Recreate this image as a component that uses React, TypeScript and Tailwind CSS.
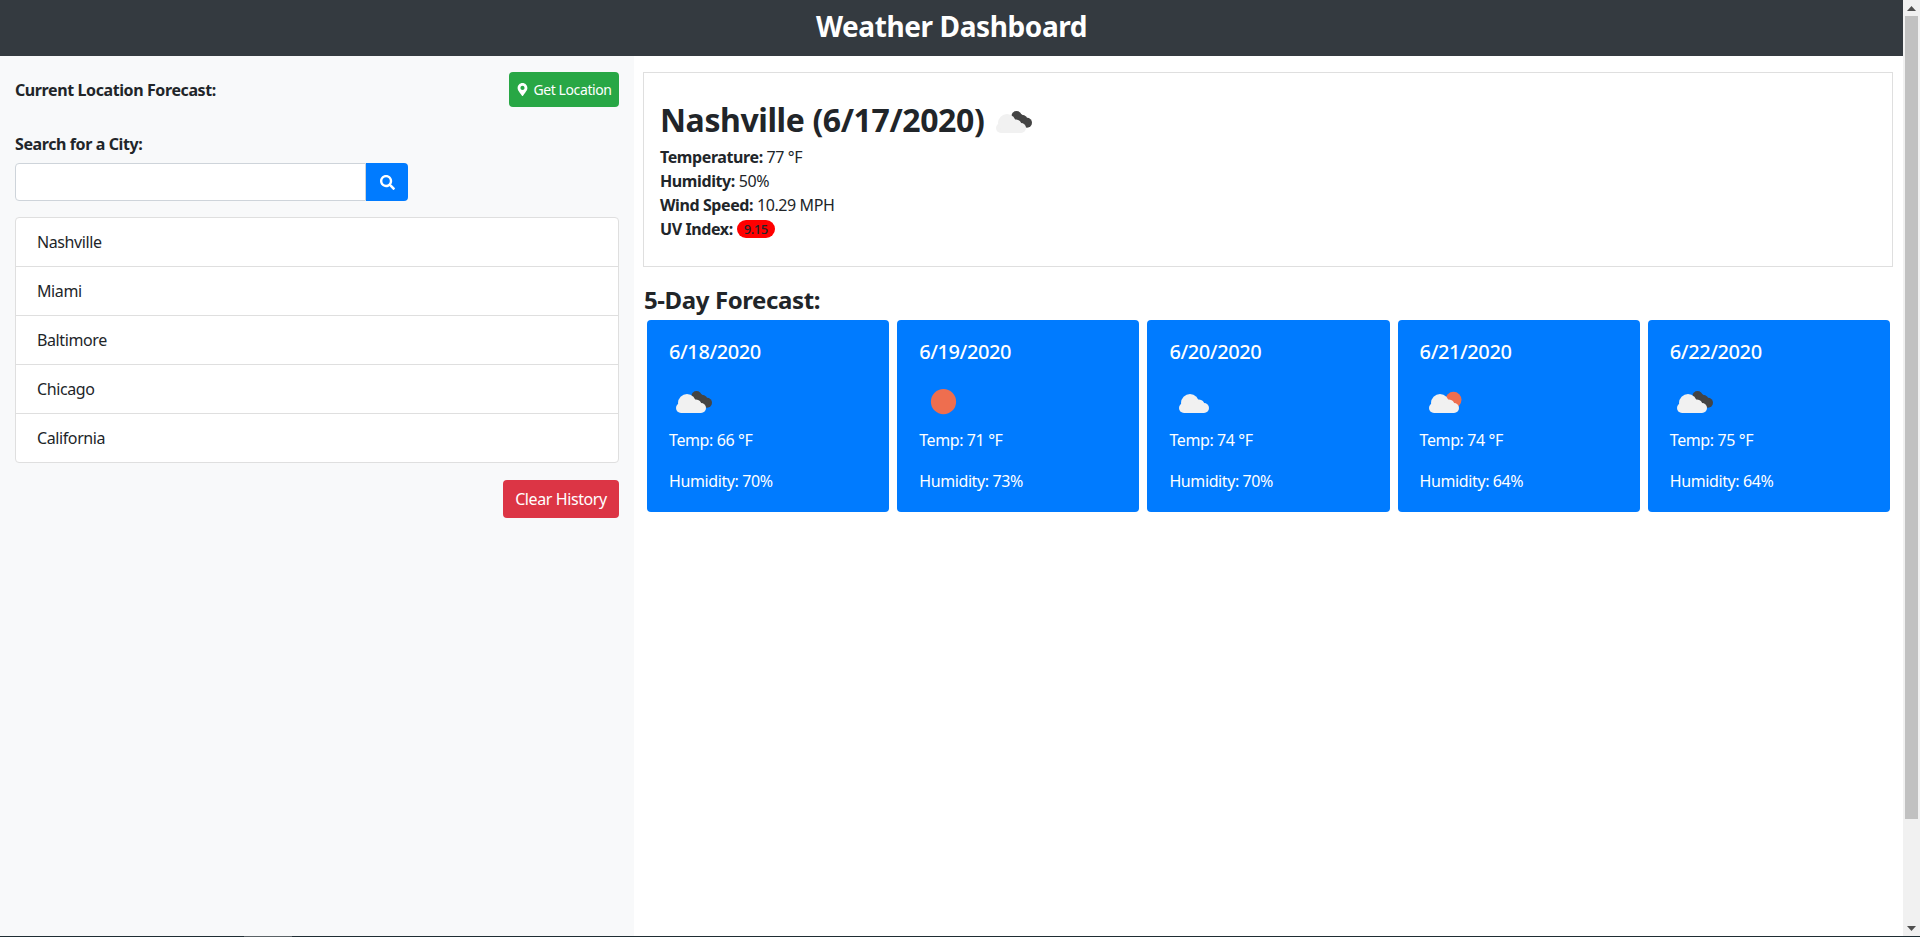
import React from "react";
import { FaMapMarkerAlt, FaSearch } from "react-icons/fa";

type Kind = "dark" | "sun" | "white" | "sunCloud";

function WeatherIcon({ kind }: { kind: Kind }) {
  const white = (dx: number) => (
    <g fill="#f1f1f1" transform={`translate(${dx} 0)`}>
      <circle cx="12" cy="31" r="5" />
      <circle cx="18" cy="26" r="9" />
      <circle cx="27" cy="28" r="5.5" />
      <circle cx="32" cy="31" r="5" />
      <rect x="12" y="28" width="20" height="8" />
    </g>
  );
  return (
    <svg width="50" height="50" viewBox="0 0 50 50" className="block shrink-0">
      {kind === "sun" && <circle cx="24.5" cy="24.7" r="12.6" fill="#ee6e4f" />}
      {kind === "dark" && (
        <g fill="#444444">
          <circle cx="27.5" cy="19" r="5" />
          <circle cx="33.5" cy="22.5" r="4.5" />
          <circle cx="38" cy="25.8" r="5" />
          <polygon points="24,23 29,15 40,22 39,30 30,30" />
        </g>
      )}
      {kind === "sunCloud" && <circle cx="33.5" cy="22.8" r="8" fill="#ee6e4f" />}
      {kind === "sun" ? null : white(kind === "dark" ? 0 : kind === "sunCloud" ? 2 : 3)}
    </svg>
  );
}

const days: { date: string; kind: Kind; temp: number; hum: number }[] = [
  { date: "6/18/2020", kind: "dark", temp: 66, hum: 70 },
  { date: "6/19/2020", kind: "sun", temp: 71, hum: 73 },
  { date: "6/20/2020", kind: "white", temp: 74, hum: 70 },
  { date: "6/21/2020", kind: "sunCloud", temp: 74, hum: 64 },
  { date: "6/22/2020", kind: "dark", temp: 75, hum: 64 },
];

const cities = ["Nashville", "Miami", "Baltimore", "Chicago", "California"];

export default function App() {
  return (
    <div className="h-[937px] w-[1920px] overflow-hidden flex flex-col bg-white text-[#212529] font-['Noto_Sans',sans-serif] text-base tracking-[-0.4px]">
      <div className="flex flex-1 min-h-0">
        <div className="w-[1903px] flex flex-col">
          <header className="h-14 shrink-0 bg-[#343a40] text-white flex items-center justify-center">
            <h1 className="text-[28px] leading-[50px] font-bold pb-1">Weather Dashboard</h1>
          </header>
          <div className="flex flex-1 min-h-0">
            <aside className="w-[634px] shrink-0 bg-[#f8f9fa] pl-[15px] pr-[15px] pt-4">
              <div className="flex items-center justify-between h-[35px]">
                <span className="font-bold leading-6">Current Location Forecast:</span>
                <button className="h-[35px] w-[110px] bg-[#28a745] text-white rounded text-sm flex items-center justify-center gap-1">
                  <FaMapMarkerAlt className="text-[13px]" />
                  Get Location
                </button>
              </div>
              <div className="font-bold leading-6 mt-[25px]">Search for a City:</div>
              <div className="flex w-[393px] h-[38px] mt-[7px]">
                <input className="flex-1 min-w-0 bg-white border border-[#ced4da] rounded-l" aria-label="Search" />
                <button className="w-[42px] bg-[#007bff] text-white rounded-r flex items-center justify-center" aria-label="Search">
                  <FaSearch className="text-[15px]" />
                </button>
              </div>
              <ul className="mt-4 bg-white border border-[#dfdfdf] rounded divide-y divide-[#dfdfdf]">
                {cities.map((c) => (
                  <li key={c} className="h-[49px] px-[21px] flex items-center last:h-[48px]">{c}</li>
                ))}
              </ul>
              <div className="flex justify-end mt-[17px]">
                <button className="h-[38px] w-[116px] bg-[#dc3545] text-white rounded">Clear History</button>
              </div>
            </aside>
            <main className="flex-1 min-w-0 pt-4 pl-[9px] pr-[10px]">
              <section className="h-[195px] border border-[#dfdfdf] px-4 pt-4">
                <div className="flex items-center h-[48px] mt-[7px]">
                  <h2 className="text-[32px] leading-[48px] font-bold">Nashville (6/17/2020)</h2>
                  <div className="ml-[5px] mt-1"><WeatherIcon kind="dark" /></div>
                </div>
                <div className="mt-[1px] leading-6">
                  <p><b>Temperature:</b> 77 °F</p>
                  <p><b>Humidity:</b> 50%</p>
                  <p><b>Wind Speed:</b> 10.29 MPH</p>
                  <p className="flex items-center gap-1">
                    <b>UV Index:</b>
                    <span className="bg-[#ff0000] rounded-full w-[38px] h-[18px] flex items-center justify-center text-[13px] font-medium">9.15</span>
                  </p>
                </div>
              </section>
              <h3 className="text-2xl leading-[36px] font-bold mt-[15px] ml-[1px]">5-Day Forecast:</h3>
              <div className="flex gap-2 ml-1 mr-[3px] mt-[2px]">
                {days.map((d) => (
                  <div key={d.date} className="flex-1 h-[192px] bg-[#007bff] text-white rounded pl-[22px] pt-5">
                    <div className="text-xl leading-6 font-medium">{d.date}</div>
                    <div className="mt-[13px]"><WeatherIcon kind={d.kind} /></div>
                    <div className="mt-[1px] leading-6">Temp: {d.temp} °F</div>
                    <div className="mt-[17px] leading-6">Humidity: {d.hum}%</div>
                  </div>
                ))}
              </div>
            </main>
          </div>
        </div>
        <div className="w-[17px] shrink-0 bg-[#f1f1f1] flex flex-col items-center">
          <div className="h-4 flex items-center justify-center">
            <svg width="9" height="5" viewBox="0 0 9 5"><polygon points="4.5,0 9,5 0,5" fill="#505050" /></svg>
          </div>
          <div className="w-[13px] h-[803px] bg-[#c1c1c1]" />
          <div className="flex-1 flex items-end pb-[5px]">
            <svg width="9" height="5" viewBox="0 0 9 5"><polygon points="0,0 9,0 4.5,5" fill="#505050" /></svg>
          </div>
        </div>
      </div>
      <div className="h-px shrink-0 bg-[#1f2d33] flex">
        <div className="w-[244px]" />
        <div className="w-12 bg-[#5a6266]" />
      </div>
    </div>
  );
}
